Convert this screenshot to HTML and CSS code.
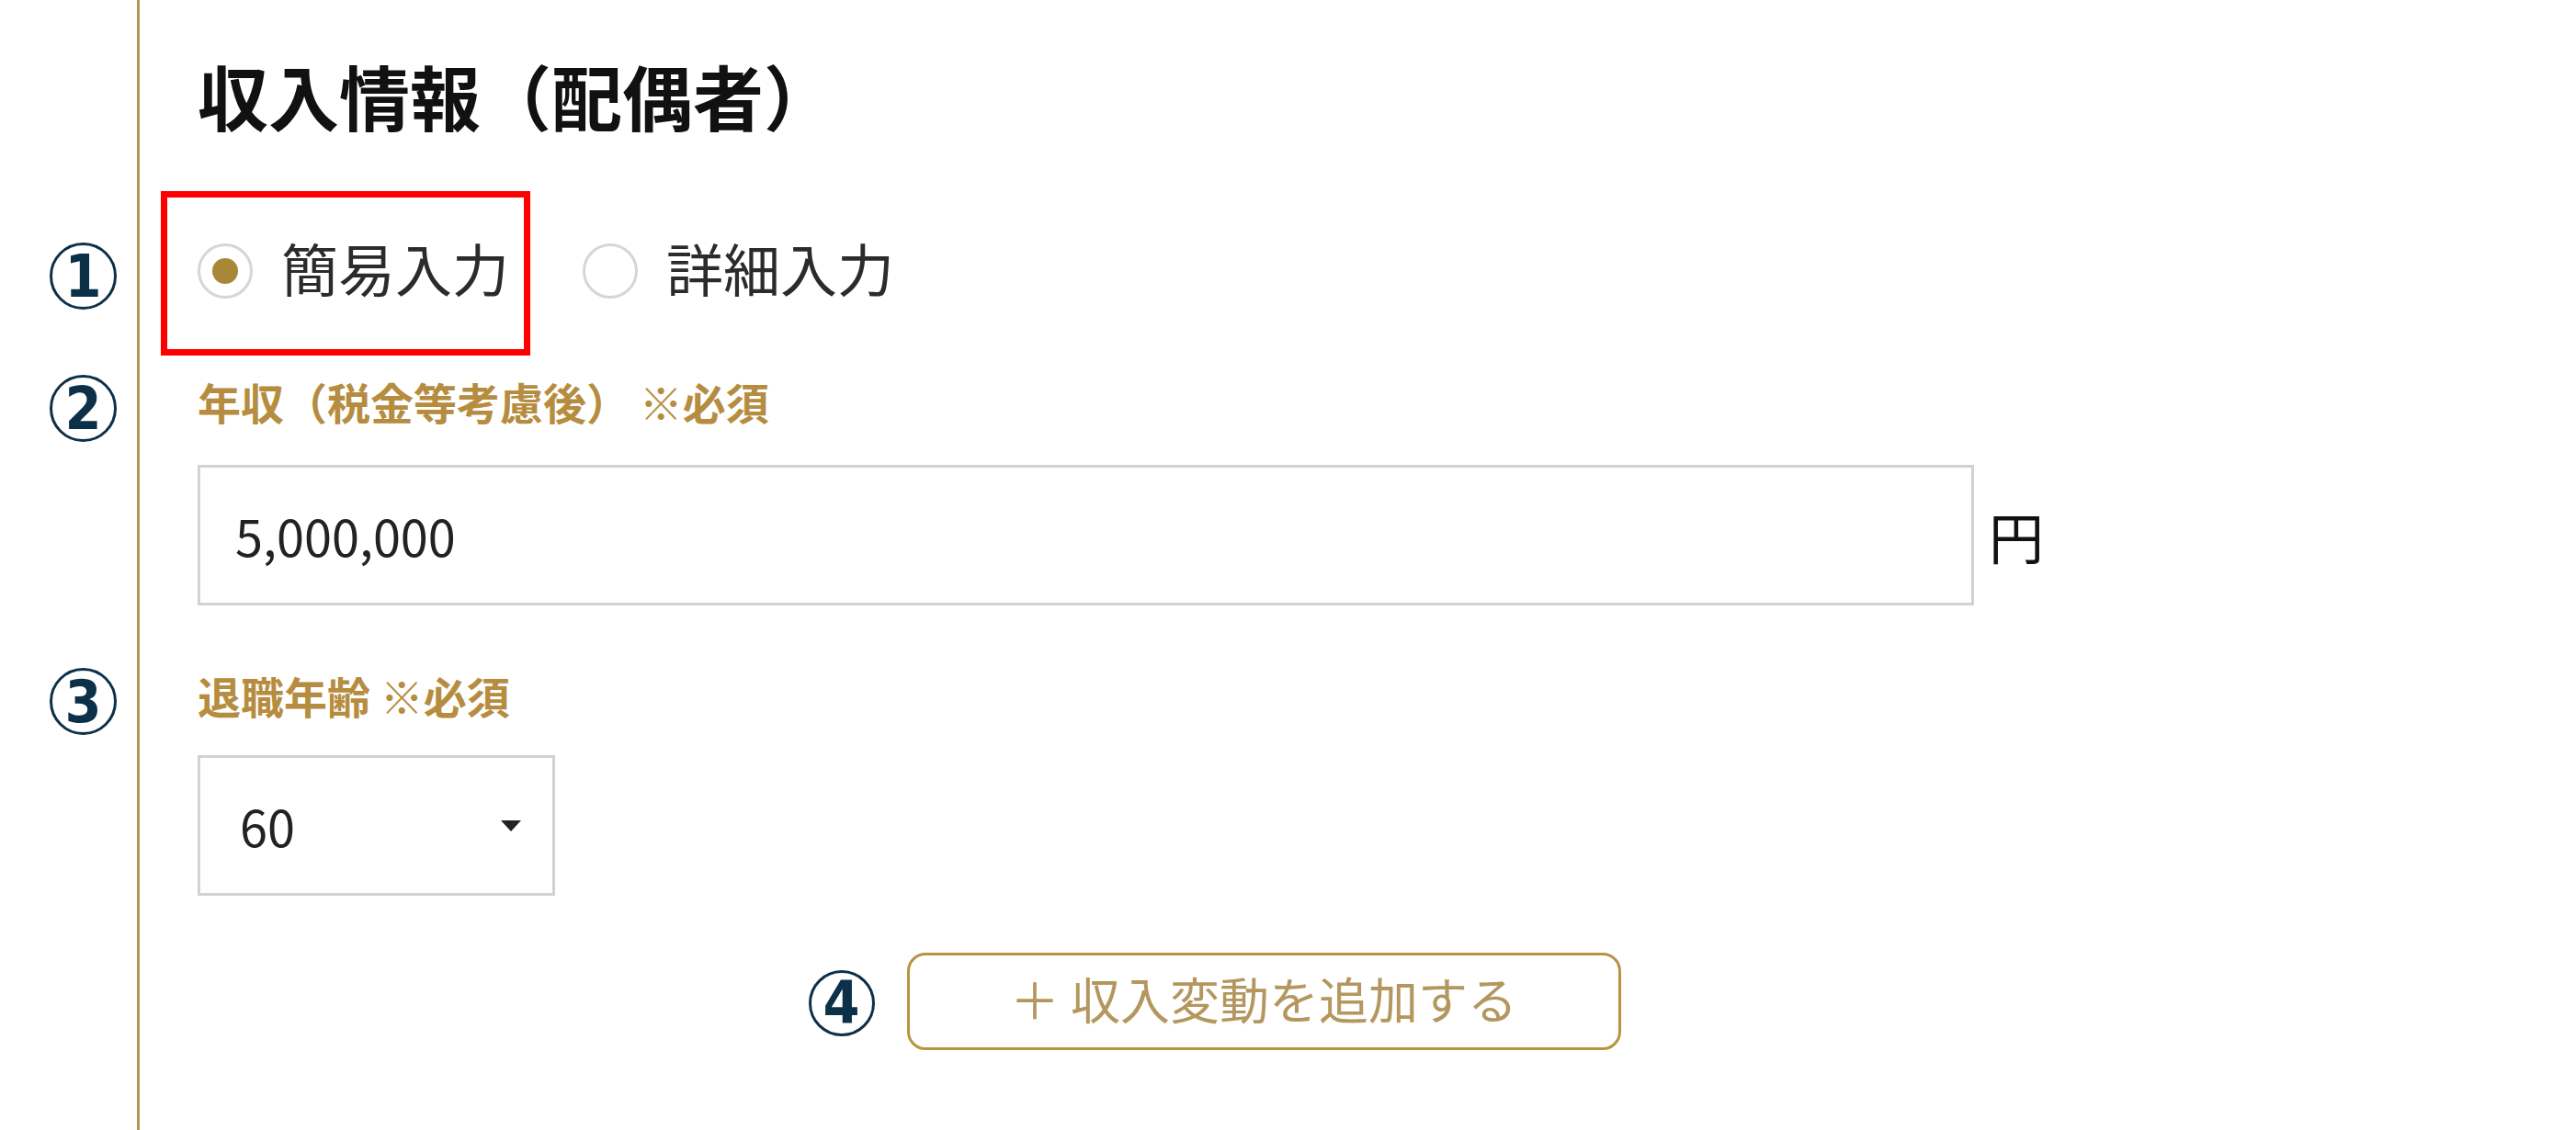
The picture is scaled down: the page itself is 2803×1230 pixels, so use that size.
FILE: index.html
```html
<!DOCTYPE html>
<html lang="ja">
<head>
<meta charset="utf-8">
<title>収入情報（配偶者）</title>
<link rel="stylesheet" href="styles.css">
</head>
<body>
<div class="page">
  <div class="gut"></div>
  <div class="cell cell-head">
    <h1 class="title">収入情報（配偶者）</h1>
  </div>

  <div class="gut"><span class="mark mark-1">1</span></div>
  <div class="cell cell-mode">
    <div class="radios">
      <label class="radio is-checked is-highlighted"><span class="radio-dot"></span><span class="radio-text">簡易入力</span></label>
      <label class="radio"><span class="radio-dot"></span><span class="radio-text">詳細入力</span></label>
    </div>
  </div>

  <div class="gut"><span class="mark mark-2">2</span></div>
  <div class="cell cell-income">
    <div class="field-label">年収（税金等考慮後） ※必須</div>
    <div class="input-row">
      <div class="text-input">5,000,000</div>
      <span class="unit">円</span>
    </div>
  </div>

  <div class="gut"><span class="mark mark-3">3</span></div>
  <div class="cell cell-retire">
    <div class="field-label">退職年齢 ※必須</div>
    <div class="select"><span class="select-value">60</span><span class="caret"></span></div>
  </div>

  <div class="gut"></div>
  <div class="cell cell-action">
    <div class="action-row">
      <div class="add-wrap">
        <span class="mark mark-4">4</span>
        <button class="add-btn" type="button"><span class="add-text">＋ 収入変動を追加する</span></button>
      </div>
    </div>
  </div>
</div>
</body>
</html>
```

FILE: styles.css
```css
html, body {
  margin: 0;
  padding: 0;
  background: #ffffff;
}

body {
  font-family: "Noto Sans CJK JP", "Noto Sans", sans-serif;
  color: #222222;
  overflow: hidden;
}

.page {
  display: grid;
  grid-template-columns: 149px 1fr;
  grid-template-rows: auto auto auto auto 1fr;
  min-height: 1230px;
}

.gut {
  padding-left: 54px;
}

.cell {
  border-left: 3px solid #b7955a;
  padding-left: 63px;
  padding-right: 268px;
}

/* circled annotation numbers */
.mark {
  box-sizing: border-box;
  width: 73px;
  height: 73px;
  border: 3px solid #0d3049;
  border-radius: 50%;
  display: flex;
  align-items: center;
  justify-content: center;
  font-family: "DejaVu Sans Condensed", "DejaVu Sans", sans-serif;
  font-weight: 700;
  font-size: 64px;
  line-height: 1;
  color: #0d3049;
}

.mark-1 { margin-top: 34px; }
.mark-2 { margin-top: 6px; }
.mark-3 { margin-top: 5px; }

/* heading */
.cell-head {
  padding-top: 50px;
  padding-bottom: 72px;
}

.title {
  margin: 0;
  font-size: 77px;
  line-height: 108px;
  font-weight: 700;
  color: #111111;
}

/* radio row */
.cell-mode {
  padding-top: 30px;
  padding-bottom: 73px;
}

.radios {
  display: flex;
  align-items: center;
}

.radio {
  display: flex;
  align-items: center;
}

.radio + .radio {
  margin-left: 80px;
}

.radio-dot {
  box-sizing: border-box;
  width: 60px;
  height: 60px;
  border: 3px solid #d6d6d6;
  border-radius: 50%;
  display: flex;
  align-items: center;
  justify-content: center;
}

.is-checked .radio-dot::after {
  content: "";
  width: 28px;
  height: 28px;
  border-radius: 50%;
  background: #a88736;
}

.radio-text {
  margin-left: 31px;
  font-size: 62px;
  line-height: 1;
  padding-bottom: 7px;
  color: #2b2b2b;
}

.is-highlighted {
  position: relative;
}

.is-highlighted::after {
  content: "";
  position: absolute;
  left: -40px;
  right: -23px;
  top: -52px;
  bottom: -58px;
  border: 7px solid #ff0000;
}

/* fields */
.field-label {
  font-size: 47px;
  line-height: 69px;
  font-weight: 700;
  color: #b68d40;
}

.cell-income {
  padding-bottom: 63px;
}

.input-row {
  margin-top: 35px;
  display: flex;
  align-items: center;
}

.text-input {
  box-sizing: border-box;
  width: 1933px;
  height: 153px;
  border: 3px solid #d2d2d2;
  padding-left: 38px;
  display: flex;
  align-items: center;
  font-size: 54px;
  color: #222222;
}

.unit {
  margin-left: 16px;
  font-size: 60px;
  line-height: 1;
  color: #111111;
}

.cell-retire {
  padding-bottom: 62px;
}

.select {
  box-sizing: border-box;
  margin-top: 31px;
  width: 389px;
  height: 153px;
  border: 3px solid #d2d2d2;
  padding: 0 34px 0 43px;
  display: flex;
  align-items: center;
  justify-content: space-between;
  font-size: 54px;
  color: #222222;
}

.caret {
  width: 0;
  height: 0;
  border-left: 11px solid transparent;
  border-right: 11px solid transparent;
  border-top: 12px solid #222222;
}

/* add button */
.action-row {
  display: flex;
  justify-content: center;
}

.add-wrap {
  position: relative;
}

.add-wrap .mark {
  position: absolute;
  right: calc(100% + 35px);
  top: 19px;
  width: 72px;
  height: 72px;
}

.add-btn {
  box-sizing: border-box;
  width: 777px;
  height: 106px;
  border: 3px solid #b8943f;
  border-radius: 20px;
  background: #ffffff;
  padding: 0 0 6px 0;
  margin: 0;
  display: flex;
  align-items: center;
  justify-content: center;
  font-family: "Noto Sans CJK JP", "Noto Sans", sans-serif;
  font-size: 54px;
  line-height: 1;
  color: #b4975e;
  cursor: pointer;
}
```
